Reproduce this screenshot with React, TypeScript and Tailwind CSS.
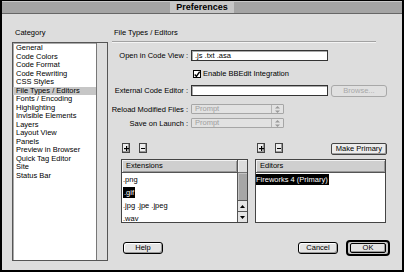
import React from "react";

const categories = [
  "General",
  "Code Colors",
  "Code Format",
  "Code Rewriting",
  "CSS Styles",
  "File Types / Editors",
  "Fonts / Encoding",
  "Highlighting",
  "Invisible Elements",
  "Layers",
  "Layout View",
  "Panels",
  "Preview in Browser",
  "Quick Tag Editor",
  "Site",
  "Status Bar",
];

const extensions = [".png", ".gif", ".jpg .jpe .jpeg", ".wav"];

function Arrows({ color = "#999" }: { color?: string }) {
  return (
    <svg width="5" height="7" viewBox="0 0 5 7">
      <polygon points="2.5,0 5,2.5 0,2.5" fill={color} />
      <polygon points="0,4.5 5,4.5 2.5,7" fill={color} />
    </svg>
  );
}

function Popup() {
  return (
    <div className="flex w-[93px] h-[10px] border border-[#a6a6a6] bg-[#e2e2e2] rounded-[1px]">
      <span className="flex-1 pl-[3px] leading-[8px] text-[#a0a0a0]">Prompt</span>
      <div className="flex w-[12px] items-center justify-center border-l border-[#b4b4b4]">
        <Arrows />
      </div>
    </div>
  );
}

function Label({ children }: { children: React.ReactNode }) {
  return (
    <span className="w-[77px] shrink-0 flex justify-end whitespace-nowrap pr-[1px] leading-[9px]">
      {children}
    </span>
  );
}

function Plus() {
  return (
    <div className="flex w-[8px] h-[10px] items-center justify-center border border-[#444] bg-[#ececec] shadow-[inset_-1px_-1px_0_#999]">
      <svg width="5" height="5" viewBox="0 0 5 5">
        <rect x="2" y="0" width="1.2" height="5" fill="black" />
        <rect x="0" y="2" width="5" height="1.2" fill="black" />
      </svg>
    </div>
  );
}

function Minus() {
  return (
    <div className="flex w-[8px] h-[10px] items-center justify-center border border-[#444] bg-[#ececec] shadow-[inset_-1px_-1px_0_#999]">
      <div className="w-[4px] h-[1px] bg-black" />
    </div>
  );
}

function ListHeader({ children }: { children: React.ReactNode }) {
  return (
    <div className="h-[13px] shrink-0 border-b border-[#555] bg-[#cfcfcf] shadow-[inset_1px_1px_0_#f2f2f2,inset_-1px_-1px_0_#999] pl-[4px] leading-[12px]">
      {children}
    </div>
  );
}

export default function App() {
  return (
    <div className="w-[406px] h-[275px] overflow-hidden bg-white font-['Liberation_Sans',Arial,sans-serif] text-[7.5px] text-black">
      <div className="w-[404px] h-[272px] border-t border-l-2 border-r-2 border-b-[2px] border-black bg-[#dddddd] flex flex-col">
        <div className="h-[13px] flex items-center justify-center bg-[#a4a4a4] border-b border-[#666] shadow-[inset_0_1px_0_#c8c8c8]">
          <span className="px-[6px] h-[11px] bg-[#c6c6c6] font-bold text-[9px] leading-[11px]">Preferences</span>
        </div>
        <div className="flex flex-1 pl-[10px] pt-[14px]">
          <div className="flex flex-col w-[96px]">
            <span className="pl-[3px] h-[9px] leading-[9px]">Category</span>
            <div className="mt-[5px] flex h-[219px] border border-[#555] bg-white shadow-[inset_1px_1px_0_#aaa]">
              <div className="flex-1 pt-[1px]">
                {categories.map((c) => (
                  <div
                    key={c}
                    className={`pl-[3px] h-[8.5px] leading-[8.5px] whitespace-nowrap ${c === "File Types / Editors" ? "bg-[#c6c6c6]" : ""}`}
                  >
                    {c}
                  </div>
                ))}
              </div>
              <div className="w-[11px] border-l border-[#777] bg-[#dedede]" />
            </div>
          </div>

          <div className="flex flex-col ml-[4px] w-[282px]">
            <span className="pl-[2px] h-[9px] leading-[9px]">File Types / Editors</span>
            <div className="mt-[4px] w-[264px] h-[2px] border-t border-[#a2a2a2] border-b border-b-[#f4f4f4]" />

            <div className="mt-[7px] flex items-center gap-[2px]">
              <Label>Open in Code View :</Label>
              <div className="w-[137px] h-[11px] border border-[#333] bg-white shadow-[inset_1px_1px_0_#aaa] pl-[3px] leading-[9px]">
                .js .txt .asa
              </div>
            </div>

            <div className="mt-[9px] flex items-center ml-[81px] h-[8px]">
              <div className="w-[8px] h-[8px] border border-black bg-white flex items-center justify-center">
                <svg width="7" height="7" viewBox="0 0 7 7">
                  <polyline points="0.8,3.6 2.8,5.8 6.6,0.3" fill="none" stroke="black" strokeWidth="1.6" />
                </svg>
              </div>
              <span className="ml-[2px] leading-[8px]">Enable BBEdit Integration</span>
            </div>

            <div className="mt-[7px] flex items-start gap-[2px] h-[12px]">
              <div className="flex items-center h-[11px]">
                <Label>External Code Editor :</Label>
              </div>
              <div className="w-[137px] h-[11px] border border-[#333] bg-white shadow-[inset_1px_1px_0_#aaa]" />
              <div className="ml-[1px] w-[56px] h-[12px] rounded-[3px] border border-[#a8a8a8] bg-[#e0e0e0] flex items-center justify-center text-[#a8a8a8]">
                Browse...
              </div>
            </div>

            <div className="mt-[7px] flex items-center gap-[2px]">
              <Label>Reload Modified Files :</Label>
              <Popup />
            </div>

            <div className="mt-[4px] flex items-center gap-[2px]">
              <Label>Save on Launch :</Label>
              <Popup />
            </div>

            <div className="mt-[15px] ml-[9px] flex items-start gap-[7px] h-[12px]">
              <div className="flex w-[127px] pl-[1px] gap-[9px]">
                <Plus />
                <Minus />
              </div>
              <div className="flex w-[132px] pl-[2px] gap-[10px]">
                <Plus />
                <Minus />
                <div className="ml-auto w-[56px] h-[12px] rounded-[2px] border border-[#444] bg-[#ececec] shadow-[inset_-1px_-1px_0_#a0a0a0] flex items-center justify-center leading-[10px]">
                  Make Primary
                </div>
              </div>
            </div>

            <div className="mt-[4px] ml-[9px] flex gap-[7px] h-[64px]">
              <div className="w-[127px] flex border border-[#444] bg-white overflow-hidden">
                <div className="flex-1 flex flex-col">
                  <ListHeader>Extensions</ListHeader>
                  {extensions.map((e) => (
                    <div key={e} className="h-[13px] leading-[13px] pl-[1px] shrink-0">
                      {e === ".gif" ? (
                        <span className="bg-black text-white px-[1px] py-[1px]">{e}</span>
                      ) : (
                        e
                      )}
                    </div>
                  ))}
                </div>
                <div className="w-[10px] flex flex-col border-l border-[#555] bg-[#cfcfcf]">
                  <div className="h-[13px] border-b border-[#777] bg-[#dcdcdc] shadow-[inset_1px_1px_0_#f0f0f0]" />
                  <div className="flex-1 bg-[#a6a6a6] shadow-[inset_1px_1px_0_#c4c4c4]" />
                  <div className="h-[11px] border-t border-[#555] bg-[#e4e4e4] flex items-center justify-center">
                    <svg width="5" height="3" viewBox="0 0 5 3">
                      <polygon points="2.5,0 5,3 0,3" fill="black" />
                    </svg>
                  </div>
                  <div className="h-[11px] border-t border-[#555] bg-[#e4e4e4] flex items-center justify-center">
                    <svg width="5" height="3" viewBox="0 0 5 3">
                      <polygon points="0,0 5,0 2.5,3" fill="black" />
                    </svg>
                  </div>
                </div>
              </div>
              <div className="w-[131px] flex flex-col border border-[#444] bg-white overflow-hidden">
                <ListHeader>Editors</ListHeader>
                <div className="mt-[2px] h-[10px] leading-[10px]">
                  <span className="bg-black text-white pr-[1px] py-[1px]">Fireworks 4 (Primary)</span>
                </div>
              </div>
            </div>

            <div className="mt-[17px] ml-[11px] w-[267px] flex items-center">
              <div className="w-[40px] h-[12px] rounded-[3px] border border-black bg-[#e4e4e4] shadow-[inset_-1px_-1px_0_#999,inset_1px_1px_0_#fff] flex items-center justify-center leading-[10px]">
                Help
              </div>
              <div className="flex-1" />
              <div className="w-[40px] h-[12px] rounded-[3px] border border-black bg-[#e4e4e4] shadow-[inset_-1px_-1px_0_#999,inset_1px_1px_0_#fff] flex items-center justify-center leading-[10px]">
                Cancel
              </div>
              <div className="ml-[8px] w-[44px] h-[16px] rounded-[4px] border-2 border-black bg-[#c8c8c8] flex items-center justify-center">
                <div className="w-[36px] h-[10px] rounded-[2px] border border-black bg-[#e4e4e4] shadow-[inset_-1px_-1px_0_#999] flex items-center justify-center leading-[8px]">
                  OK
                </div>
              </div>
            </div>
          </div>
        </div>
      </div>
    </div>
  );
}
